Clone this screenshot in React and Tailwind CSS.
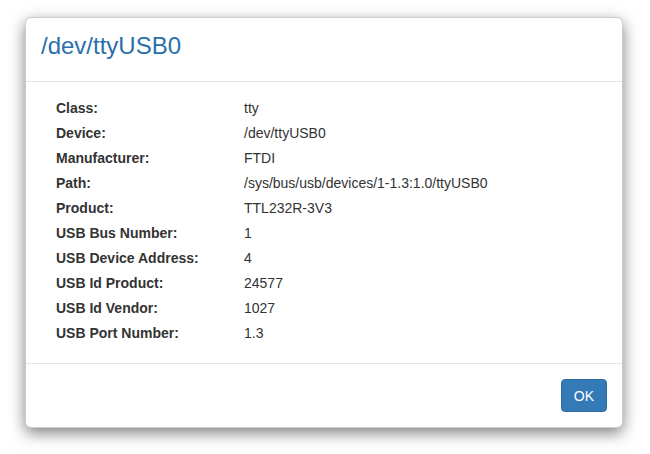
import React from 'react';

const rows = [
  ['Class:', 'tty'],
  ['Device:', '/dev/ttyUSB0'],
  ['Manufacturer:', 'FTDI'],
  ['Path:', '/sys/bus/usb/devices/1-1.3:1.0/ttyUSB0'],
  ['Product:', 'TTL232R-3V3'],
  ['USB Bus Number:', '1'],
  ['USB Device Address:', '4'],
  ['USB Id Product:', '24577'],
  ['USB Id Vendor:', '1027'],
  ['USB Port Number:', '1.3'],
];

const App = () => {
  return (
    <div
      className="w-[650px] h-[454px] bg-white pt-[17px] pl-[25px] text-[#333]"
      style={{ fontFamily: '"Liberation Sans", Arial, sans-serif' }}
    >
      <div className="w-[598px] bg-white border border-black/20 rounded-[6px] shadow-[0_5px_15px_rgba(0,0,0,0.5)] flex flex-col">
        {/* Header */}
        <div className="h-[64px] px-[15px] pt-[15px] border-b border-[#e5e5e5]">
          <h3 className="text-[24px] leading-[26px] text-[#2a6fad] m-0">/dev/ttyUSB0</h3>
        </div>

        {/* Body */}
        <div className="pt-[14px] pb-[17px] px-[30px] text-[14px]">
          {rows.map(([label, value]) => (
            <div key={label} className="flex h-[25px] leading-[25px]">
              <div className="w-[188px] font-bold shrink-0">{label}</div>
              <div>{value}</div>
            </div>
          ))}
        </div>

        {/* Footer */}
        <div className="border-t border-[#e5e5e5] px-[15px] pt-[15px] pb-[15px] flex justify-end">
          <button className="h-[33px] px-[12px] bg-[#337ab7] border border-[#2e6da4] rounded-[4px] text-white text-[14px] leading-[20px]">
            OK
          </button>
        </div>
      </div>
    </div>
  );
};

export default App;
